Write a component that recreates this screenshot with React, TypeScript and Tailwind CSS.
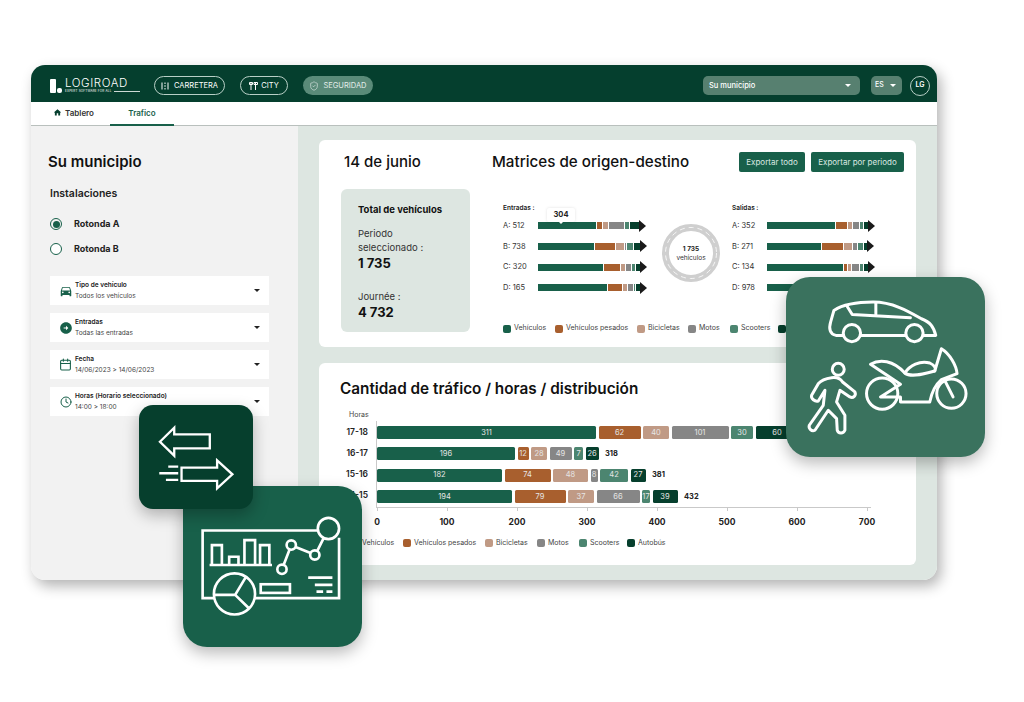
import { Calendar, Clock, ShieldCheck } from 'lucide-react';
import { MdArrowCircleRight, MdDirectionsCar, MdHome } from 'react-icons/md';

const colors = ['#18604a', '#a85f2e', '#c09a85', '#868686', '#4c8570', '#063f2d'];
const legendNames = ['Vehículos', 'Vehículos pesados', 'Bicicletas', 'Motos', 'Scooters', 'Autobús'];

const Caret = ({ className = '' }: { className?: string }) => (
  <span className={`w-0 h-0 border-x-[3px] border-x-transparent border-t-[3px] ${className}`} />
);

const Legend = ({ gaps, className = '' }: { gaps: number[]; className?: string }) => (
  <div className={`flex items-center ${className}`}>
    {legendNames.map((name, i) => (
      <div key={name} className="flex items-center gap-[3px] shrink-0" style={{ width: gaps[i] }}>
        <span className="w-[8px] h-[8px] rounded-[2px] shrink-0" style={{ backgroundColor: colors[i] }} />
        <span className="text-[7px] text-[#444] whitespace-nowrap">{name}</span>
      </div>
    ))}
  </div>
);

const FlowBar = ({ label, parts }: { label: string; parts: number[] }) => (
  <div className="flex items-center h-[7px]">
    <span className="w-[35px] text-[7.5px] text-[#333] whitespace-nowrap">{label}</span>
    <div className="flex items-center gap-px">
      {parts.map((w, i) => (
        <span key={i} className="h-[7px] block" style={{ width: w, backgroundColor: colors[i] }} />
      ))}
    </div>
    <span className="w-0 h-0 border-y-[6px] border-y-transparent border-l-[7px] border-l-[#1a1a1a]" />
  </div>
);

const entradas = [
  { label: 'A: 512', parts: [58, 5, 5, 15, 4, 9] },
  { label: 'B: 738', parts: [56, 20, 8, 1, 6, 6] },
  { label: 'C: 320', parts: [65, 16, 4, 5, 3, 4] },
  { label: 'D: 165', parts: [69, 14, 4, 5, 1, 4] },
];

const salidas = [
  { label: 'A: 352', parts: [68, 11, 4, 6, 3, 4] },
  { label: 'B: 271', parts: [54, 21, 8, 4, 5, 3] },
  { label: 'C: 134', parts: [76, 3, 3, 7, 3, 4] },
  { label: 'D: 978', parts: [70, 9, 4, 6, 3, 4] },
];

const hourRows = [
  { label: '17-18', total: '', segs: [[311, 219], [62, 42], [40, 26], [101, 57], [30, 22], [60, 43]] },
  { label: '16-17', total: '318', segs: [[196, 138], [12, 11], [28, 16], [49, 22], [7, 9], [26, 13]] },
  { label: '15-16', total: '381', segs: [[182, 125], [74, 46], [48, 35], [8, 7], [42, 28], [27, 15]] },
  { label: '14-15', total: '432', segs: [[194, 135], [79, 51], [37, 26], [66, 43], [17, 8], [39, 25]] },
];

const filters = [
  { icon: <MdDirectionsCar className="w-[14px] h-[14px] text-[#18604a]" />, title: 'Tipo de vehículo', sub: 'Todos los vehículos' },
  { icon: <MdArrowCircleRight className="w-[14px] h-[14px] text-[#18604a]" />, title: 'Entradas', sub: 'Todas las entradas' },
  { icon: <Calendar className="w-[13px] h-[13px] text-[#18604a]" />, title: 'Fecha', sub: '14/06/2023 > 14/06/2023' },
  { icon: <Clock className="w-[12px] h-[12px] text-[#18604a]" />, title: 'Horas (Horario seleccionado)', sub: '14:00 > 18:00' },
];

const Header = () => (
  <div className="h-[37px] bg-[#053f2e] flex items-center pl-[19px] pr-[7px] pt-[4px] text-white shrink-0">
    <div className="flex items-center w-[104px]">
      <svg width="12" height="14" viewBox="0 0 12 14" className="mr-[3px]">
        <rect x="0" y="0" width="6" height="14" rx="1" fill="#fff" />
        <rect x="7" y="9" width="5" height="5" rx="2" fill="#fff" />
      </svg>
      <div className="flex flex-col leading-none">
        <span className="text-[11.5px] font-light tracking-[0.6px]">LOGIROAD</span>
        <span className="flex items-center gap-[2px] mt-px">
          <span className="text-[3px] tracking-[0.2px]">EXPERT SOFTWARE FOR ALL</span>
          <span className="w-[26px] h-px bg-white/80" />
        </span>
      </div>
    </div>
    <div className="flex items-center gap-[5px] h-[19px] w-[71px] justify-center rounded-full border border-[#b8cfc6] text-[7.5px]">
      <svg width="8" height="8" viewBox="0 0 8 8" stroke="#fff" strokeWidth="1">
        <path d="M1 0.5V7.5M7 0.5V7.5M4 0.5V2M4 3.2V4.8M4 6V7.5" />
      </svg>
      CARRETERA
    </div>
    <div className="ml-[15px] flex items-center gap-[3px] h-[19px] w-[48px] justify-center rounded-full border border-[#b8cfc6] text-[7.5px]">
      <svg width="9" height="10" viewBox="0 0 9 10" stroke="#fff" strokeWidth="1" fill="none">
        <path d="M2 1V9M6.5 1V9M0.5 1.5H3.5V3.5H0.5ZM5 1.5H8.5V3.5H5Z" />
      </svg>
      CITY
    </div>
    <div className="ml-[15px] flex items-center gap-[4px] h-[19px] w-[70px] justify-center rounded-full bg-[#5a8b79] text-[7.5px] text-[#e4eeea]">
      <ShieldCheck className="w-[10px] h-[10px]" strokeWidth={1.5} />
      SEGURIDAD
    </div>
    <div className="ml-auto flex items-center justify-between w-[157px] h-[19px] rounded-[5px] bg-[#578070] px-[6px] text-[7.5px] font-medium">
      Su municipio
      <Caret className="border-t-white mr-[3px]" />
    </div>
    <div className="ml-[11px] flex items-center gap-[6px] w-[31px] h-[19px] rounded-[5px] bg-[#578070] pl-[4px] text-[7px] font-medium">
      ES
      <Caret className="border-t-white" />
    </div>
    <div className="ml-[8px] w-[20px] h-[20px] rounded-full border border-[#b8cfc6] flex items-center justify-center text-[7px] font-semibold">
      LG
    </div>
  </div>
);

const Tabs = () => (
  <div className="h-[24px] bg-white border-b border-[#b9c0bd] flex items-stretch pl-[22px] shrink-0 text-[8px] font-semibold">
    <div className="flex items-center gap-[3px] w-[58px] text-[#333] -mt-[2px]">
      <MdHome className="w-[9px] h-[9px] text-[#053f2e]" />
      Tablero
    </div>
    <div className="ml-[-1px] w-[64px] flex items-center justify-center text-[#18604a] border-b-2 border-[#18604a] -mb-px">
      Trafico
    </div>
  </div>
);

const Sidebar = () => (
  <div className="w-[267px] bg-[#f2f2f2] pl-[19px] pr-[29px] shrink-0">
    <h1 className="text-[15px] font-semibold text-[#111] -ml-[2px] mt-[26px] leading-[20px]">Su municipio</h1>
    <div className="text-[10.5px] font-semibold text-[#222] mt-[15px] leading-[14px]">Instalaciones</div>
    <div className="flex items-center mt-[17px] h-[12px]">
      <span className="w-[12px] h-[12px] rounded-full border border-[#18604a] p-[1.5px] block">
        <span className="block w-full h-full rounded-full bg-[#18604a]" />
      </span>
      <span className="ml-[12px] text-[9px] font-bold text-[#222]">Rotonda A</span>
    </div>
    <div className="flex items-center mt-[13px] h-[12px]">
      <span className="w-[12px] h-[12px] rounded-full border border-[#18604a] bg-white block" />
      <span className="ml-[12px] text-[9px] font-bold text-[#222]">Rotonda B</span>
    </div>
    <div className="flex flex-col gap-[8px] mt-[21px]">
      {filters.map((f) => (
        <div key={f.title} className="h-[29px] bg-white flex items-center pl-[6px] pr-[9px]">
          <span className="w-[19px] flex justify-center shrink-0">{f.icon}</span>
          <div className="flex flex-col gap-[2px] leading-[9px]">
            <span className="text-[6.5px] font-semibold text-[#222]">{f.title}</span>
            <span className="text-[6.5px] text-[#444]">{f.sub}</span>
          </div>
          <Caret className="ml-auto border-t-[#222]" />
        </div>
      ))}
    </div>
  </div>
);

const MatrixCard = () => (
  <div className="h-[207px] bg-white rounded-[6px] shrink-0 pl-[22px] pr-[12px] pt-[11px]">
    <div className="flex items-center h-[22px]">
      <span className="text-[15px] font-medium text-[#111] ml-[3px] w-[148px]">14 de junio</span>
      <span className="text-[15.2px] font-medium text-[#111] whitespace-nowrap">Matrices de origen-destino</span>
      <button className="ml-auto w-[66px] h-[20px] rounded-[2px] bg-[#18604a] text-[8px] text-[#dbe8e2]">Exportar todo</button>
      <button className="ml-[6px] w-[93px] h-[20px] rounded-[2px] bg-[#18604a] text-[8px] text-[#dbe8e2]">Exportar por periodo</button>
    </div>
    <div className="flex mt-[16px]">
      <div className="w-[129px] h-[143px] rounded-[6px] bg-[#dde6e1] pl-[17px] pt-[14px] text-[#333] shrink-0">
        <div className="text-[9.5px] font-bold text-[#111] leading-[13px]">Total de vehículos</div>
        <div className="text-[9.5px] leading-[14px] mt-[11px]">Periodo<br />seleccionado :</div>
        <div className="text-[13px] font-bold text-[#111] leading-[16px]">1 735</div>
        <div className="text-[9.5px] leading-[14px] mt-[19px]">Journée :</div>
        <div className="text-[13px] font-bold text-[#111] leading-[16px]">4 732</div>
      </div>
      <div className="ml-[33px] flex flex-col">
        <div className="flex items-start">
          <div className="relative w-[159px] shrink-0 pt-[15px]">
            <div className="text-[6.5px] font-semibold text-[#222] leading-[8px]">Entradas :</div>
            <div className="flex flex-col gap-[13.8px] mt-[10px]">
              {entradas.map((r) => <FlowBar key={r.label} {...r} />)}
            </div>
            <div className="absolute left-[44px] top-[19px] w-[28px] h-[14px] bg-white rounded-[2px] shadow-[0_0_3px_rgba(0,0,0,0.12)] text-[7.5px] font-bold text-[#222] flex items-center justify-center">
              304
              <span className="absolute left-[12px] top-[14px] w-0 h-0 border-x-[2px] border-x-transparent border-t-[2px] border-t-white" />
            </div>
          </div>
          <div className="relative w-[58px] h-[58px] mt-[35px] shrink-0 flex flex-col items-center justify-center">
            <svg width="58" height="58" viewBox="0 0 58 58" className="absolute inset-0">
              <circle cx="29" cy="29" r="25.5" fill="none" stroke="#cfcfcf" strokeWidth="7" />
              <circle cx="29" cy="29" r="25.5" fill="none" stroke="#fff" strokeWidth="0.8" strokeDasharray="5 4" />
            </svg>
            <span className="text-[6.5px] font-bold text-[#222] leading-[10px]">1 735</span>
            <span className="text-[6.5px] text-[#333] leading-[9px]">vehículos</span>
          </div>
          <div className="ml-[12px] w-[159px] shrink-0 pt-[15px]">
            <div className="text-[6.5px] font-semibold text-[#222] leading-[8px]">Salidas :</div>
            <div className="flex flex-col gap-[13.8px] mt-[10px]">
              {salidas.map((r) => <FlowBar key={r.label} {...r} />)}
            </div>
          </div>
        </div>
        <Legend gaps={[52, 82, 51, 42, 48, 50]} className="mt-[32px]" />
      </div>
    </div>
  </div>
);

const TrafficCard = () => (
  <div className="flex-1 bg-white rounded-[6px] pl-[21px] pt-[15px] min-h-0">
    <h2 className="text-[15.3px] font-semibold text-[#111] leading-[22px]">Cantidad de tráfico / horas / distribución</h2>
    <div className="text-[7px] text-[#444] ml-[9px] mt-[10px] leading-[10px]">Horas</div>
    <div className="flex mt-[1px]">
      <div className="flex flex-col gap-[8px] py-[5px] border-r border-[#c9c9c9] w-[37px] h-[87px]">
        {hourRows.map((r) => (
          <div key={r.label} className="h-[13px] flex items-center justify-end pr-[8px] text-[8.5px] font-semibold text-[#222]">
            {r.label}
          </div>
        ))}
      </div>
      <div className="flex flex-col gap-[8.3px] py-[5px] border-b border-[#c9c9c9] w-[494px] h-[87px]">
        {hourRows.map((r) => (
          <div key={r.label} className="flex items-center gap-[2.5px] h-[13px]">
            {r.segs.map(([value, width], i) => (
              <span
                key={i}
                className="h-[13px] rounded-[1.5px] flex items-center justify-center text-[7.5px] text-[#e6e6e6] shrink-0"
                style={{ width, backgroundColor: colors[i] }}
              >
                {value}
              </span>
            ))}
            <span className="ml-[4px] text-[7.5px] font-bold text-[#222]">{r.total}</span>
          </div>
        ))}
      </div>
    </div>
    <div className="flex ml-[2px]">
      {['0', '100', '200', '300', '400', '500', '600', '700'].map((t) => (
        <div key={t} className="w-[70px] flex flex-col items-center shrink-0">
          <span className="w-px h-[3px] bg-[#c9c9c9]" />
          <span className="text-center text-[8.5px] font-bold text-[#222] mt-[5px]">{t}</span>
        </div>
      ))}
    </div>
    <Legend gaps={[52, 82, 52, 42, 48, 50]} className="mt-[9px] ml-[11px]" />
  </div>
);

const Tile = ({ className, children }: { className: string; children: React.ReactNode }) => (
  <div className={`absolute shadow-[0_6px_16px_rgba(0,0,0,0.28)] ${className}`}>{children}</div>
);

export default function App() {
  return (
    <div className="relative w-[1024px] h-[702px] bg-white overflow-hidden pt-[65px] pl-[31px] font-['Inter',sans-serif]">
      <div className="w-[906px] h-[515px] rounded-[14px] shadow-[4px_6px_14px_rgba(0,0,0,0.3)] overflow-hidden flex flex-col">
        <Header />
        <Tabs />
        <div className="flex flex-1 min-h-0">
          <Sidebar />
          <div className="flex-1 bg-[#dde6e1] pl-[21px] pr-[21px] pt-[14px] pb-[15px] flex flex-col gap-[16px] min-w-0">
            <MatrixCard />
            <TrafficCard />
          </div>
        </div>
      </div>

      <Tile className="left-[183px] top-[486px] w-[179px] h-[161px] rounded-[24px] bg-[#18604a]">
        <svg viewBox="160 272 535 485" className="w-full h-full" fill="none" stroke="#fff" strokeWidth="8">
          <path d="M565 406H217V610H252M375 610H628V428" />
          <circle cx="596" cy="400" r="32" />
          <path d="M238 510H426M245 510V450H275V510M297 510V485H325V510M343 510V435H375V510M390 510V450H418V510" />
          <circle cx="456" cy="523" r="14" />
          <circle cx="484" cy="450" r="14" />
          <circle cx="555" cy="480" r="14" />
          <path d="M461 510L479 463M497 456L542 474M562 468L582 428" />
          <circle cx="313" cy="597" r="62" />
          <path d="M315 600L348 545M315 600L358 642M315 600H252" />
          <rect x="392" y="568" width="88" height="26" />
          <path d="M535 548H608M555 570H608M560 590H580M590 590H608" />
        </svg>
      </Tile>

      <Tile className="left-[139px] top-[405px] w-[114px] h-[104px] rounded-[14px] bg-[#063f2d]">
        <svg viewBox="27 30 343 312" className="w-full h-full" fill="none" stroke="#fff" strokeWidth="7">
          <path d="M90 140L133 98V118H240V160H133V182Z" />
          <path d="M155 218H262V196L308 238L262 280V258H155Z" />
          <path d="M115 215H145M88 235H145M108 255H145" />
        </svg>
      </Tile>

      <Tile className="left-[786px] top-[277px] w-[199px] h-[180px] rounded-[24px] bg-[#3a725e]">
        <svg viewBox="438 290 598 540" className="w-full h-full" fill="none" stroke="#fff" strokeWidth="9" strokeLinejoin="round" strokeLinecap="round">
          <path d="M608 465H588C570 462 566 445 572 425L582 390C610 372 660 365 700 365C760 365 810 395 845 415C872 425 882 440 888 465H850M664 465H796" />
          <circle cx="636" cy="458" r="26" />
          <circle cx="824" cy="458" r="26" />
          <path d="M622 378L637 402L812 412M708 368V404" />
          <circle cx="595" cy="567" r="18" />
          <path d="M575 592C590 590 600 592 608 605L645 635C650 645 640 655 630 650L600 630L590 665L615 705V750C610 762 595 760 592 750L590 715L565 690L525 750C515 755 505 745 508 735L550 675L555 630L535 662C525 665 512 655 515 645L535 610C545 598 560 594 575 592Z" />
          <circle cx="727" cy="640" r="47" />
          <circle cx="935" cy="640" r="44" />
          <path d="M692 552C720 535 760 540 795 578C810 555 840 540 870 548C885 555 890 565 885 572L905 505C930 520 950 555 952 580L905 598C885 615 875 640 870 665H782V650H722L782 612L692 552Z" />
          <path d="M795 578C810 590 840 585 885 572M915 600L940 650" />
        </svg>
      </Tile>
    </div>
  );
}
